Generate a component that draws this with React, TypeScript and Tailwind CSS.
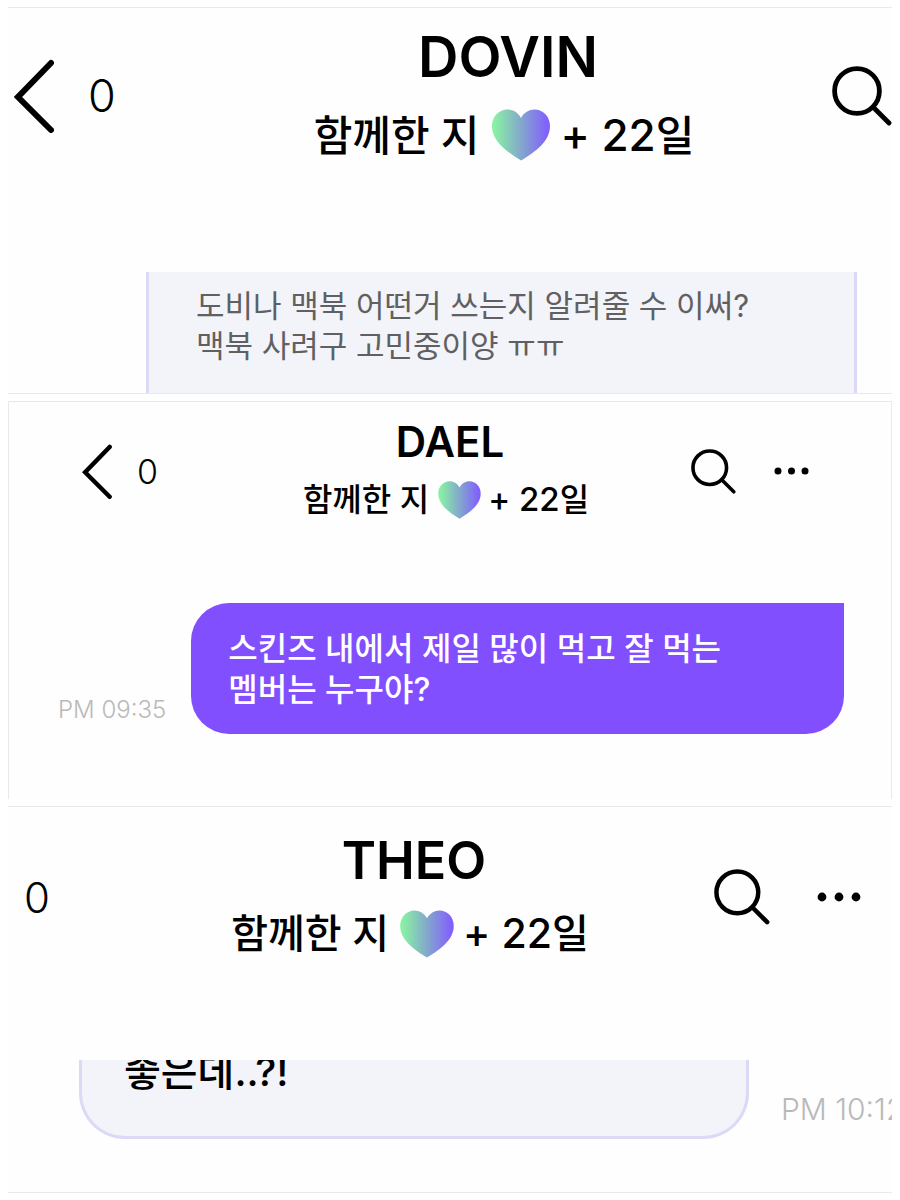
import { useId } from "react";

const FONT = "font-['Inter','Noto_Sans_CJK_KR',sans-serif]";

const BackIcon = ({ className }: { className: string }) => (
	<svg viewBox="0 0 40 74" fill="none" className={className}>
		<path
			d="M37 4 4 38 37 71"
			stroke="black"
			strokeWidth="6"
			strokeLinecap="round"
			strokeLinejoin="miter"
		/>
	</svg>
);

const SearchIcon = ({ className }: { className: string }) => (
	<svg viewBox="0 0 60 60" fill="none" stroke="black" className={className}>
		<circle cx="25" cy="25" r="22.4" strokeWidth="4.800" />
		<path d="M41 41 57 57" strokeWidth="4.800" strokeLinecap="round" />
	</svg>
);

const MoreIcon = ({ className }: { className: string }) => (
	<svg viewBox="0 0 44 10" fill="black" className={className}>
		<circle cx="5" cy="5" r="4.4" />
		<circle cx="22" cy="5" r="4.4" />
		<circle cx="39" cy="5" r="4.4" />
	</svg>
);

const Heart = ({ className }: { className: string }) => {
	const id = useId();

	return (
		<svg viewBox="0 0 58 52" className={className}>
			<defs>
				<linearGradient id={id} x1="0" y1="0" x2="1" y2="0">
					<stop offset="0.05" stopColor="#88f0a4" />
					<stop offset="0.5" stopColor="#83a8cc" />
					<stop offset="0.95" stopColor="#8261fb" />
				</linearGradient>
			</defs>
			<path
				d="M29 9C26 3.500 21 .5 15.500 .5 7 .5 0 7.500 0 17c0 15.500 15 26 29 34.500C43 43 58 32.500 58 17 58 7.500 51 .5 42.500 .5 37 .5 32 3.500 29 9Z"
				fill={`url(#${id})`}
			/>
		</svg>
	);
};

const DovinPanel = () => (
	<section className="border-y border-[#e9e9eb] bg-[#fefefe] overflow-hidden">
		<header className="grid grid-cols-[300fr_400fr_184fr] items-center pt-[10px] pb-[98px]">
			<div className="flex items-center gap-[34px] pl-[6px]">
				<button aria-label="Back">
					<BackIcon className="w-10 h-[74px]" />
				</button>
				<span className="text-[45px] font-light">0</span>
			</div>
			<div className="flex flex-col items-center whitespace-nowrap">
				<h2 className="text-[56px] leading-[78px] font-semibold">DOVIN</h2>
				<p className="flex items-center h-[78px] mr-2 [font-feature-settings:'calt'_0]">
					<span className="text-[42px] font-medium">함께한 지</span>
					<Heart className="w-[58px] h-[52px] ml-[13px] mr-[10px]" />
					<span className="text-[44px] font-[450]">+ 22</span>
					<span className="text-[42px] font-medium">일</span>
				</p>
			</div>
			<div className="flex justify-end">
				<button aria-label="Search">
					<SearchIcon className="size-[60px]" />
				</button>
			</div>
		</header>
		<div className="ml-[138px] mr-[35px] border-x-[3px] border-[#dcd9f7] bg-[#f3f4f9] pl-[47px] pt-[14px] pb-[27px]">
			<p className="text-[31px] leading-[40px] text-[#606062]">
				도비나 맥북 어떤거 쓰는지 알려줄 수 이써?
				<br />
				맥북 사려구 고민중이양 ㅠㅠ
			</p>
		</div>
	</section>
);

const DaelPanel = () => (
	<section className="border-x border-t border-[#e9e9eb] bg-[#fefefe] overflow-hidden">
		<header className="grid grid-cols-[288fr_306fr_288fr] items-center pt-[11px] pb-[74px]">
			<div className="flex items-center gap-[25px] pl-[73px]">
				<button aria-label="Back">
					<BackIcon className="w-[30px] h-[55px]" />
				</button>
				<span className="text-[34px] font-light">0</span>
			</div>
			<div className="flex flex-col items-center whitespace-nowrap">
				<h2 className="text-[42px] leading-[58px] font-semibold">DAEL</h2>
				<p className="flex items-center h-[58px] mr-2 [font-feature-settings:'calt'_0]">
					<span className="text-[32px] font-medium">함께한 지</span>
					<Heart className="w-[43px] h-[38px] ml-[9px] mr-[7px]" />
					<span className="text-[33px] font-[450]">+ 22</span>
					<span className="text-[32px] font-medium">일</span>
				</p>
			</div>
			<div className="flex items-center justify-end gap-[38px] pr-[82px]">
				<button aria-label="Search">
					<SearchIcon className="size-[45px]" />
				</button>
				<button aria-label="More">
					<MoreIcon className="w-[35px] h-2" />
				</button>
			</div>
		</header>
		<div className="flex items-end gap-[25px] pl-[49px] pr-[47px] pb-[65px]">
			<time className="shrink-0 text-[24px] leading-[32px] pb-2 font-light text-[#b9b9b9]">
				PM 09:35
			</time>
			<p className="flex-1 rounded-[38px] rounded-tr-none bg-[#824fff] pl-[37px] pt-[25px] pb-6 text-[32px] leading-[41px] font-medium text-white">
				스킨즈 내에서 제일 많이 먹고 잘 먹는
				<br />
				멤버는 누구야?
			</p>
		</div>
	</section>
);

const TheoPanel = () => (
	<section className="border-y border-[#e9e9eb] bg-[#fefefe] overflow-hidden">
		<header className="grid grid-cols-[216fr_380fr_288fr] items-center pt-[17px] pb-[90px]">
			<div className="pl-4">
				<span className="text-[42px] font-light">0</span>
			</div>
			<div className="flex flex-col items-center whitespace-nowrap">
				<h2 className="text-[52px] leading-[73px] font-semibold">THEO</h2>
				<p className="flex items-center h-[73px] mr-2 [font-feature-settings:'calt'_0]">
					<span className="text-[40px] font-medium">함께한 지</span>
					<Heart className="w-[54px] h-[48px] ml-[11px] mr-[9px]" />
					<span className="text-[41px] font-[450]">+ 22</span>
					<span className="text-[40px] font-medium">일</span>
				</p>
			</div>
			<div className="flex items-center justify-end gap-[47px] pr-[31px]">
				<button aria-label="Search">
					<SearchIcon className="size-[56px]" />
				</button>
				<button aria-label="More">
					<MoreIcon className="w-[44px] h-[10px]" />
				</button>
			</div>
		</header>
		<div className="flex items-end overflow-hidden pl-[71px] pb-[53px]">
			<p className="-mt-4 flex-1 rounded-b-[46px] border-x-[3px] border-b-[3px] border-[#dcd9f7] bg-[#f3f4f9] pl-[42px] pb-[36px] text-[40px] leading-[56px] font-medium">
				좋은데..?!
			</p>
			<div className="ml-8 w-[111px] shrink-0 overflow-hidden pb-2">
				<time className="block whitespace-nowrap text-[30px] leading-[44px] font-light text-[#b9b9b9]">
					PM 10:12
				</time>
			</div>
		</div>
	</section>
);

const App = () => (
	<main
		className={`${FONT} flex flex-col gap-[7px] bg-white px-2 py-[7px] text-black`}
	>
		<DovinPanel />
		<DaelPanel />
		<TheoPanel />
	</main>
);

export default App;
